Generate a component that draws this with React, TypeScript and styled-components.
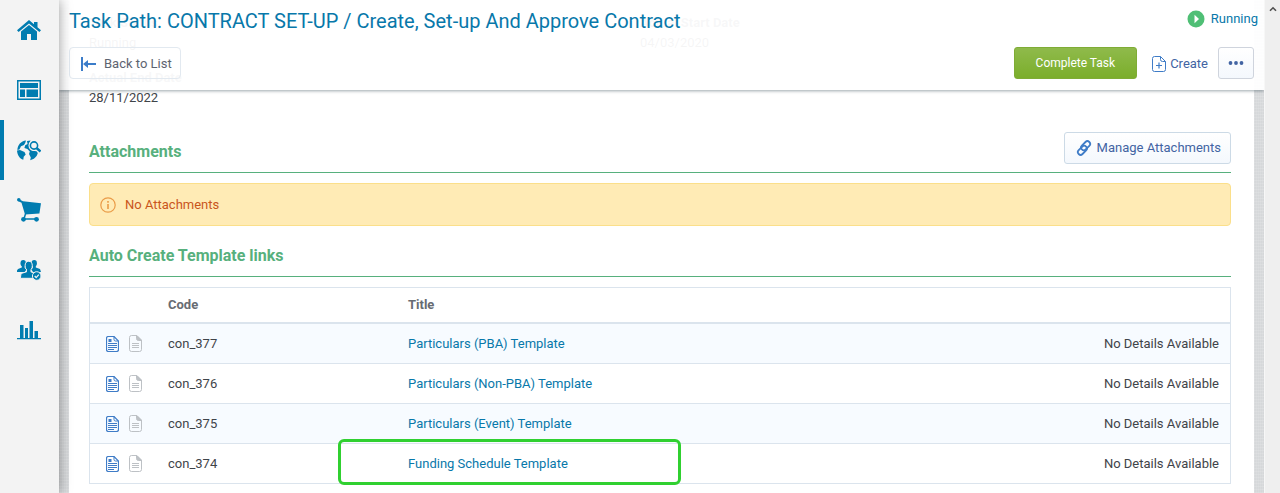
import React from "react";
import styled, { createGlobalStyle, css } from "styled-components";

const GlobalStyle = createGlobalStyle`
  *, *::before, *::after { box-sizing: border-box; }
  body {
    margin: 0;
    background: #fff;
    color: #3f4449;
    font: 13px/20px Roboto, "Liberation Sans", sans-serif;
  }
  button { font: inherit; cursor: pointer; }
  a { color: #0878aa; text-decoration: none; }
  a:hover { text-decoration: underline; }
`;

const Shell = styled.div`
  display: grid;
  grid-template-columns: 59px minmax(0, 1fr) 16px;
  min-height: 100vh;
`;

const Sidebar = styled.nav`
  display: flex;
  flex-direction: column;
  z-index: 3;
  background: #f3f3f3;
  box-shadow: 0 0 12px rgba(0, 0, 0, 0.4);
`;

const NavLink = styled.a<{ $active?: boolean }>`
  display: flex;
  align-items: center;
  justify-content: center;
  height: 60px;
  padding-right: 5px;
  border-left: 4px solid ${(p) => (p.$active ? "#007cb0" : "transparent")};
  color: #007cb0;
`;

const Main = styled.main`
  display: grid;
  grid-template-columns: minmax(0, 1fr);
  background-color: #d9dbdd;
  background-image:
    repeating-linear-gradient(0deg, rgba(255, 255, 255, 0.12) 0 1px, transparent 1px 3px),
    repeating-linear-gradient(90deg, rgba(120, 125, 130, 0.04) 0 1px, transparent 1px 2px);
`;

const Header = styled.header`
  grid-area: 1 / 1;
  align-self: start;
  z-index: 2;
  display: flex;
  flex-direction: column;
  gap: 9px;
  padding: 4px 0 11px 10px;
  background: rgba(255, 255, 255, 0.95);
  box-shadow: 0 1px 3px rgba(60, 80, 90, 0.5);
`;

const HeaderRow = styled.div`
  display: flex;
  align-items: center;
  justify-content: space-between;
`;

const PageTitle = styled.h1`
  margin: 0;
  color: #0878aa;
  font-size: 20px;
  font-weight: 400;
  line-height: 34px;
`;

const Status = styled.a`
  display: flex;
  align-items: center;
  gap: 6px;
  padding: 0 6px 4px 0;
`;

const Actions = styled.div`
  display: flex;
  align-items: center;
  gap: 10px;
  padding-right: 10px;
`;

const Button = styled.button<{ $kind?: "plain" | "primary" | "ghost" | "square" }>`
  display: inline-flex;
  align-items: center;
  justify-content: center;
  gap: 4px;
  height: 32px;
  padding: 0 9px;
  border: 1px solid #ccdae6;
  border-radius: 3px;
  background: linear-gradient(#fff, #f4f8fd);
  color: #4264a3;
  ${(p) =>
    p.$kind === "plain" &&
    css`
      gap: 7px;
      padding: 1px 8px 0 9px;
      border-color: #e2e9f0;
      border-radius: 4px;
      background: transparent;
      color: #5d6470;
    `}
  ${(p) =>
    p.$kind === "primary" &&
    css`
      padding: 0 21px;
      border-color: #7fac35;
      background: linear-gradient(#8fba4b, #7bae2b);
      color: #fff;
      font-size: 12px;
    `}
  ${(p) =>
    p.$kind === "ghost" &&
    css`
      padding: 1px 0 0 5px;
      border: 0;
      background: none;
    `}
  ${(p) =>
    p.$kind === "square" &&
    css`
      width: 36px;
      padding: 0;
      border-color: #cfd4dd;
    `}
`;

const Card = styled.section`
  grid-area: 1 / 1;
  margin: 0 10px;
  padding: 13px 23px 8px 20px;
  background: #fff;
`;

const Fields = styled.dl`
  display: grid;
  grid-template-columns: 551px 1fr;
  row-gap: 15px;
  margin: 0 0 24px;
`;

const Field = styled.div`
  dt { color: #63686e; font-weight: 700; }
  dd { margin: 0; }
`;

const SectionHead = styled.div`
  display: flex;
  align-items: flex-end;
  justify-content: space-between;
  margin-bottom: 10px;
  padding-bottom: 8px;
  border-bottom: 1px solid #57b07d;
`;

const SectionTitle = styled.h2`
  margin: 0;
  color: #57b07d;
  font-size: 16px;
  font-weight: 700;
  line-height: 24px;
`;

const Notice = styled.p`
  display: flex;
  align-items: center;
  gap: 9px;
  margin: 0 0 18px;
  padding: 11px 10px 10px;
  border: 1px solid #fbdf8a;
  border-radius: 4px;
  background: #ffebb5;
  color: #c9551c;
  svg { color: #ea9c48; }
`;

const Table = styled.table`
  width: 100%;
  table-layout: fixed;
  border-collapse: separate;
  border-spacing: 0;
  border: 1px solid #dbe4ed;
`;

const HeadCell = styled.th<{ $width?: number }>`
  width: ${(p) => (p.$width ? `${p.$width}px` : "auto")};
  height: 36px;
  padding: 0 11px;
  border-bottom: 2px solid #dbe4ed;
  color: #676c73;
  font-weight: 700;
  text-align: left;
`;

const Row = styled.tr`
  &:nth-child(odd) { background: #f7fbff; }
  &:last-child td { height: 39px; border-bottom: 0; }
`;

const Cell = styled.td<{ $right?: boolean }>`
  height: 40px;
  padding: 0 11px;
  border-bottom: 1px solid #dbe4ed;
  text-align: ${(p) => (p.$right ? "right" : "left")};
`;

const IconPair = styled.div`
  display: flex;
  align-items: center;
  gap: 10px;
  padding-left: 5px;
`;

const TitleSlot = styled.div`
  position: relative;
`;

const Highlight = styled.span`
  position: absolute;
  inset: -15px auto -11px -70px;
  width: 343px;
  border: 3px solid #30d030;
  border-radius: 6px;
  pointer-events: none;
`;

const ScrollTrack = styled.div`
  display: flex;
  justify-content: center;
  align-items: flex-start;
  z-index: 3;
  padding-top: 6px;
  border-left: 1px solid #f7f7f7;
  background: #efefef;
`;

const Svg = ({ w, h, children }: { w: number; h: number; children: React.ReactNode }) => (
  <svg width={w} height={h} viewBox={`0 0 ${w} ${h}`} fill="currentColor" aria-hidden="true">
    {children}
  </svg>
);

const HomeIcon = () => (
  <Svg w={24} h={20}>
    <path d="M12 0 L17 4.2 V2 h3.5 v5.2 L24 10.2 22.4 12 12 3.4 1.6 12 0 10.2z" />
    <path d="M12 5 L20 11.6 V20 H14 V14 h-4 v6 H4 V11.6z" />
  </Svg>
);

const DashboardIcon = () => (
  <Svg w={24} h={20}>
    <path fillRule="evenodd" d="M0 0h24v20H0zM1.500 1.500v17h21v-17z" />
    <path d="M3 3h18v5H3zM3 9.500h5V17H3zM9.500 9.500H21V17H9.500z" />
  </Svg>
);

const GlobeSearchIcon = () => (
  <Svg w={24} h={22}>
    <path d="M9 1.500 C4 2 .5 6 .4 11 l2-.6 1.600-3.200 3-1.200 1.300-2.300z" />
    <path d="M0 11.500 l3-.6 4.500 2.200 1.200 2.300-2 2.400-.4 3C2.500 19.600.2 15.500 0 11.500z" />
    <path d="M10 2 l3.500-.4-1.200 3 .4 4 3 3.200 3.800.4 1.300 1.800c-.8 3.800-4.200 6.600-7.600 7.200l.6-2.800-1.800-3.400.8-2.400-2.400-2.600-3-1 .8-2.800 2.400-1.200z" />
    <circle cx="17" cy="6.500" r="5.500" fill="#f3f3f3" />
    <circle cx="17" cy="6.500" r="3.600" fill="#f3f3f3" stroke="currentColor" strokeWidth="1.600" />
    <path d="M19.500 9 l4 3.500" stroke="currentColor" strokeWidth="2.400" />
  </Svg>
);

const CartIcon = () => (
  <Svg w={24} h={24}>
    <circle cx="1.800" cy="1.800" r="1.800" />
    <path d="M1.500 1 L6 3.200 24 5.200 22.400 15.500 8 16.500 4.500 4.800 1 3z" />
    <path d="M8.500 16 L7 20.500 M6 21h14" stroke="currentColor" strokeWidth="1.500" fill="none" />
    <circle cx="6.500" cy="21.300" r="2.400" />
    <circle cx="19.500" cy="21.300" r="2.400" />
  </Svg>
);

const PeopleIcon = () => (
  <Svg w={24} h={22}>
    <ellipse cx="6.200" cy="4.200" rx="2.700" ry="3.300" />
    <ellipse cx="17.200" cy="4.200" rx="2.700" ry="3.300" />
    <path d="M4.800 6h3v3l2 1-2 3H0v-1.500L1 10l3.800-1.500zM15.800 6h3v2.500L23 10l1 3h-8l-2-3 1.800-1z" />
    <g stroke="#f3f3f3" strokeWidth="1">
      <path d="M9.800 9.500h3.800v3.200l4.800 1.800 1 4.800H3.300l.8-4.800 5.700-1.800z" />
      <ellipse cx="11.700" cy="6.800" rx="3.600" ry="4.500" />
    </g>
    <path d="M10 9h3.400v4H10z" />
    <circle cx="19.700" cy="17" r="4.300" stroke="#f3f3f3" />
    <path d="M17.700 17l1.500 1.600 2.600-3" stroke="#f3f3f3" strokeWidth="1.300" fill="none" />
  </Svg>
);

const ChartIcon = () => (
  <Svg w={24} h={20}>
    <path d="M0 18h24v1.200H0zM3 5h3.500v13H3zM8 8h3v10H8zM12.500 1h3.500v17h-3.500zM17.500 11h3.500v7h-3.500z" />
  </Svg>
);

const PlayIcon = () => (
  <svg width="18" height="18" viewBox="0 0 18 18" aria-hidden="true">
    <circle cx="9" cy="9" r="8.500" fill="#4fbf75" />
    <path d="M7.500 4.800v8.400L12 9z" fill="#fff" />
  </svg>
);

const BackIcon = () => (
  <Svg w={18} h={16}>
    <path d="M2 1h2v14H2zM4 8l5-4v3h8v2H9v3z" fill="#3b7cc9" />
  </Svg>
);

const CreateIcon = () => (
  <svg width="14" height="16" viewBox="0 0 14 16" fill="none" stroke="#3f7cc7" aria-hidden="true">
    <path d="M8.500.500h-6q-2 0-2 2v11q0 2 2 2h9q2 0 2-2v-8zM8.500.500v3q0 2 2 2h3" />
    <path d="M7 6.500v6M4 9.500h6" strokeWidth="1.200" />
  </svg>
);

const DotsIcon = () => (
  <Svg w={16} h={4}>
    <circle cx="2.500" cy="2" r="1.900" />
    <circle cx="8" cy="2" r="1.900" />
    <circle cx="13.500" cy="2" r="1.900" />
  </Svg>
);

const ClipIcon = () => (
  <svg width="19" height="16" viewBox="-2 0 19 16" fill="none" stroke="#3f7cc7" strokeWidth="1.800" aria-hidden="true">
    <g transform="rotate(-45 8 8)">
      <rect x="0" y="5.800" width="10.500" height="5.400" rx="2.700" />
      <rect x="5.500" y="4.800" width="10.500" height="5.400" rx="2.700" />
    </g>
  </svg>
);

const InfoIcon = () => (
  <svg width="16" height="16" viewBox="0 0 16 16" fill="none" stroke="currentColor" aria-hidden="true">
    <circle cx="8" cy="8" r="7.200" strokeWidth="1.200" />
    <path d="M8 7v5M8 4v1.700" strokeWidth="1.600" />
  </svg>
);

const ArticleIcon = () => (
  <svg width="13" height="16" viewBox="0 0 13 16" fill="none" stroke="#3f7cc7" aria-hidden="true">
    <path d="M8 .500H2.500q-2 0-2 2v11q0 2 2 2h8q2 0 2-2V5z" strokeWidth="1.200" />
    <path d="M8 .500v3q0 1.500 1.500 1.500h3" />
    <path d="M2.500 3h3v3h-3z" fill="#3f7cc7" stroke="none" />
    <path d="M2 7.500h9M2 9.500h9M2 11.500h9M2 13.500h6" />
  </svg>
);

const NoteIcon = () => (
  <svg width="13" height="17" viewBox="0 0 13 17" fill="none" stroke="#bdc1c5" aria-hidden="true">
    <path d="M8 .500H2.500q-2 0-2 2v12q0 2 2 2h8q2 0 2-2V5z" />
    <path d="M7.500.500v3q0 2 2 2h3z" fill="#bdc1c5" />
    <path d="M3 8.500h7M3 10.500h7M3 12.500h7" />
  </svg>
);

const ScrollUpIcon = () => (
  <svg width="8" height="6" viewBox="0 0 8 6" fill="none" stroke="#505050" strokeWidth="1.600" aria-hidden="true">
    <path d="M1 4.800l3-3 3 3" />
  </svg>
);

const navItems = [
  { label: "Home", Icon: HomeIcon },
  { label: "Dashboard", Icon: DashboardIcon },
  { label: "Sourcing", Icon: GlobeSearchIcon, active: true },
  { label: "Purchasing", Icon: CartIcon },
  { label: "Suppliers", Icon: PeopleIcon },
  { label: "Reports", Icon: ChartIcon },
];

const fields = [
  { label: "Task Status", value: "Running" },
  { label: "Actual Start Date", value: "04/03/2020" },
  { label: "Actual End Date", value: "28/11/2022" },
];

const templates = [
  { code: "con_377", title: "Particulars (PBA) Template" },
  { code: "con_376", title: "Particulars (Non-PBA) Template" },
  { code: "con_375", title: "Particulars (Event) Template" },
  { code: "con_374", title: "Funding Schedule Template", highlighted: true },
];

export default function App() {
  return (
    <>
      <GlobalStyle />
      <Shell>
        <Sidebar aria-label="Main">
          {navItems.map(({ label, Icon, active }) => (
            <NavLink key={label} href="#" aria-label={label} $active={active}>
              <Icon />
            </NavLink>
          ))}
        </Sidebar>
        <Main>
          <Header>
            <HeaderRow>
              <PageTitle>Task Path: CONTRACT SET-UP / Create, Set-up And Approve Contract</PageTitle>
              <Status href="#"><PlayIcon />Running</Status>
            </HeaderRow>
            <HeaderRow>
              <Button type="button" $kind="plain"><BackIcon />Back to List</Button>
              <Actions>
                <Button type="button" $kind="primary">Complete Task</Button>
                <Button type="button" $kind="ghost"><CreateIcon />Create</Button>
                <Button type="button" $kind="square" aria-label="More"><DotsIcon /></Button>
              </Actions>
            </HeaderRow>
          </Header>
          <Card>
            <Fields>
              {fields.map((f) => (
                <Field key={f.label}>
                  <dt>{f.label}</dt>
                  <dd>{f.value}</dd>
                </Field>
              ))}
            </Fields>
            <SectionHead>
              <SectionTitle>Attachments</SectionTitle>
              <Button type="button"><ClipIcon />Manage Attachments</Button>
            </SectionHead>
            <Notice><InfoIcon />No Attachments</Notice>
            <SectionHead>
              <SectionTitle>Auto Create Template links</SectionTitle>
            </SectionHead>
            <Table>
              <thead>
                <tr>
                  <HeadCell $width={67} aria-label="Documents" />
                  <HeadCell $width={240}>Code</HeadCell>
                  <HeadCell>Title</HeadCell>
                  <HeadCell $width={200} aria-label="Details" />
                </tr>
              </thead>
              <tbody>
                {templates.map((t) => (
                  <Row key={t.code}>
                    <Cell><IconPair><ArticleIcon /><NoteIcon /></IconPair></Cell>
                    <Cell>{t.code}</Cell>
                    <Cell>
                      <TitleSlot>
                        <a href="#">{t.title}</a>
                        {t.highlighted && <Highlight />}
                      </TitleSlot>
                    </Cell>
                    <Cell $right>No Details Available</Cell>
                  </Row>
                ))}
              </tbody>
            </Table>
          </Card>
        </Main>
        <ScrollTrack aria-hidden="true"><ScrollUpIcon /></ScrollTrack>
      </Shell>
    </>
  );
}
